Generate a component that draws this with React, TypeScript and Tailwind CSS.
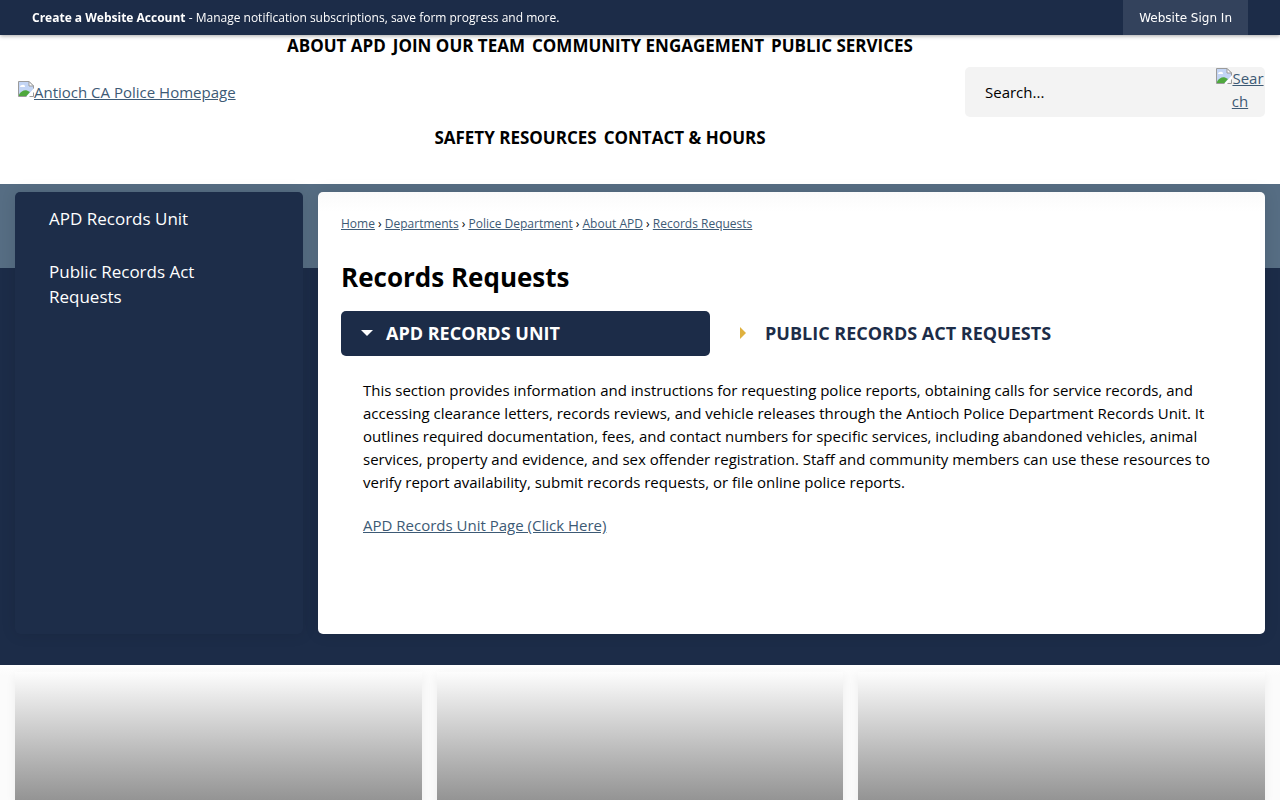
import React from "react";

const navItems = [
  "About APD",
  "Join Our Team",
  "Community Engagement",
  "Public Services",
  "Safety Resources",
  "Contact & Hours",
];

const crumbs = ["Home", "Departments", "Police Department", "About APD", "Records Requests"];

function MissingImage({ className = "" }: { className?: string }) {
  return (
    <svg viewBox="0 0 16 16" aria-hidden="true" className={`h-4 w-4 shrink-0 ${className}`}>
      <path d="M0.5 0.5H11L15.5 5V8L9 15.5H0.5Z" fill="#c3d5f5" />
      <path d="M2 6a2 2 0 0 1 2-2 2 2 0 0 1 3 2Z" fill="#fff" />
      <path d="M1 15V13.5C3 10.5 6 8.5 9 9.5L12 11L8.5 15Z" fill="#4fa83d" />
      <path d="M16 7.5L8 16H10.5L16 10.5Z" fill="#fff" />
      <path d="M0.5 15.5V0.5H11L15.5 5V7.5M0.5 15.5H8.5M11.5 15.5H15.5V11.5" fill="none" stroke="#9b9b9b" />
      <path d="M11 0.5V5H15.5Z" fill="#fff" stroke="#9b9b9b" />
    </svg>
  );
}

function TopBar() {
  return (
    <div className="fixed inset-x-0 top-0 z-10 flex h-[35px] items-center justify-between bg-[#1c2c48] px-8 text-[12px] text-white shadow-[0_1px_4px_rgba(0,0,0,0.35)]">
      <p>
        <a href="#account" className="font-bold">Create a Website Account</a>
        {" - Manage notification subscriptions, save form progress and more."}
      </p>
      <a href="#signin" className="flex h-full items-center bg-[#33425c] px-4 font-['DejaVu_Sans',sans-serif]">
        Website Sign In
      </a>
    </div>
  );
}

function Header() {
  return (
    <header className="flex items-center justify-between bg-white pr-[15px] pl-[18px]">
      <a href="#home" className="flex w-[217px] shrink-0 items-center text-[15px] whitespace-nowrap text-[#3d5a75] underline">
        <MissingImage className="mb-1.5" />
        Antioch CA Police Homepage
      </a>
      <nav className="w-[670px]">
        <ul className="flex flex-wrap justify-center gap-x-px">
          {navItems.map((item) => (
            <li key={item}>
              <a href="#nav" className="flex h-[92px] items-center px-[3px] text-[17px] font-bold text-black uppercase">
                {item}
              </a>
            </li>
          ))}
        </ul>
      </nav>
      <form className="flex h-[50px] w-[300px] shrink-0 rounded-[5px] bg-[#f3f3f3]">
        <input
          type="text"
          aria-label="Search"
          placeholder="Search..."
          className="min-w-0 flex-1 bg-transparent pl-5 text-[15px] text-black outline-none placeholder:text-black"
        />
        <a href="#search" className="w-[50px] text-center text-[15px] leading-[23px] break-all text-[#3d5a75] underline">
          <MissingImage className="inline-block align-[0px]" />
          Search
        </a>
      </form>
    </header>
  );
}

function Sidebar() {
  return (
    <aside className="w-72 shrink-0 rounded-[5px] bg-[#1d2d49] shadow-[0_0_15px_rgba(0,0,0,0.1)]">
      <ul className="text-[17px] leading-[25px] text-white">
        <li>
          <a href="#unit" className="block px-[34px] py-[14px]">APD Records Unit</a>
        </li>
        <li>
          <a href="#pra" className="block py-[14px] pr-20 pl-[34px]">Public Records Act Requests</a>
        </li>
      </ul>
    </aside>
  );
}

function Content() {
  return (
    <main className="min-w-0 flex-1 rounded-[5px] bg-white bg-[linear-gradient(#fafafa,#ffffff_20px)] px-[23px] pt-[23px] pb-[97px] shadow-[0_0_15px_rgba(0,0,0,0.1)]">
      <nav aria-label="Breadcrumb" className="text-[12px] leading-[18px] text-black">
        {crumbs.map((crumb, i) => (
          <React.Fragment key={crumb}>
            {i > 0 && " › "}
            <a href="#crumb" className="text-[#3d5a75] underline">{crumb}</a>
          </React.Fragment>
        ))}
      </nav>
      <h1 className="mt-6 text-[26px] leading-[40px] font-bold text-black">Records Requests</h1>
      <div role="tablist" className="mt-[14px] flex gap-[10px] text-[18px] font-bold">
        <button
          type="button"
          role="tab"
          aria-selected="true"
          className="flex h-[45px] w-[369px] items-center rounded-[5px] bg-[#1c2c48] pb-px pl-5 text-white uppercase"
        >
          <span className="flex w-[25px]">
            <svg viewBox="0 0 12 6" className="h-[6px] w-3" aria-hidden="true">
              <path d="M0 0H12L6 6Z" fill="#fff" />
            </svg>
          </span>
          APD Records Unit
        </button>
        <button
          type="button"
          role="tab"
          aria-selected="false"
          className="flex h-[45px] w-[369px] items-center rounded-[5px] pb-px pl-5 text-[#1c2c48] uppercase"
        >
          <span className="flex w-[25px]">
            <svg viewBox="0 0 6 12" className="h-3 w-[6px]" aria-hidden="true">
              <path d="M0 0L6 6L0 12Z" fill="#dfb13f" />
            </svg>
          </span>
          Public Records Act Requests
        </button>
      </div>
      <div role="tabpanel" className="px-[22px] pt-[23px] text-[15px] leading-[23px] text-black">
        <p>
          This section provides information and instructions for requesting police reports, obtaining calls for
          service records, and accessing clearance letters, records reviews, and vehicle releases through the Antioch
          Police Department Records Unit. It outlines required documentation, fees, and contact numbers for specific
          services, including abandoned vehicles, animal services, property and evidence, and sex offender
          registration. Staff and community members can use these resources to verify report availability, submit
          records requests, or file online police reports.
        </p>
        <p className="mt-5">
          <a href="#records" className="text-[#3d5a75] underline">APD Records Unit Page (Click Here)</a>
        </p>
      </div>
    </main>
  );
}

export default function App() {
  return (
    <div className="bg-white font-['Open_Sans',sans-serif]">
      <TopBar />
      <Header />
      <div className="flex gap-[15px] bg-[linear-gradient(#566d83_84px,#1c2c48_84px)] px-[15px] pt-2 pb-[31px]">
        <Sidebar />
        <Content />
      </div>
      <footer className="grid grid-cols-3 gap-[15px] overflow-hidden bg-[linear-gradient(#ffffff,#fbfbfb_10px)] px-[15px] pt-[7px]">
        {["news", "events", "services"].map((id) => (
          <section
            key={id}
            className="h-32 bg-linear-to-b from-[#fdfdfd] to-[#949494] shadow-[0_4px_10px_rgba(0,0,0,0.06)]"
          />
        ))}
      </footer>
    </div>
  );
}
